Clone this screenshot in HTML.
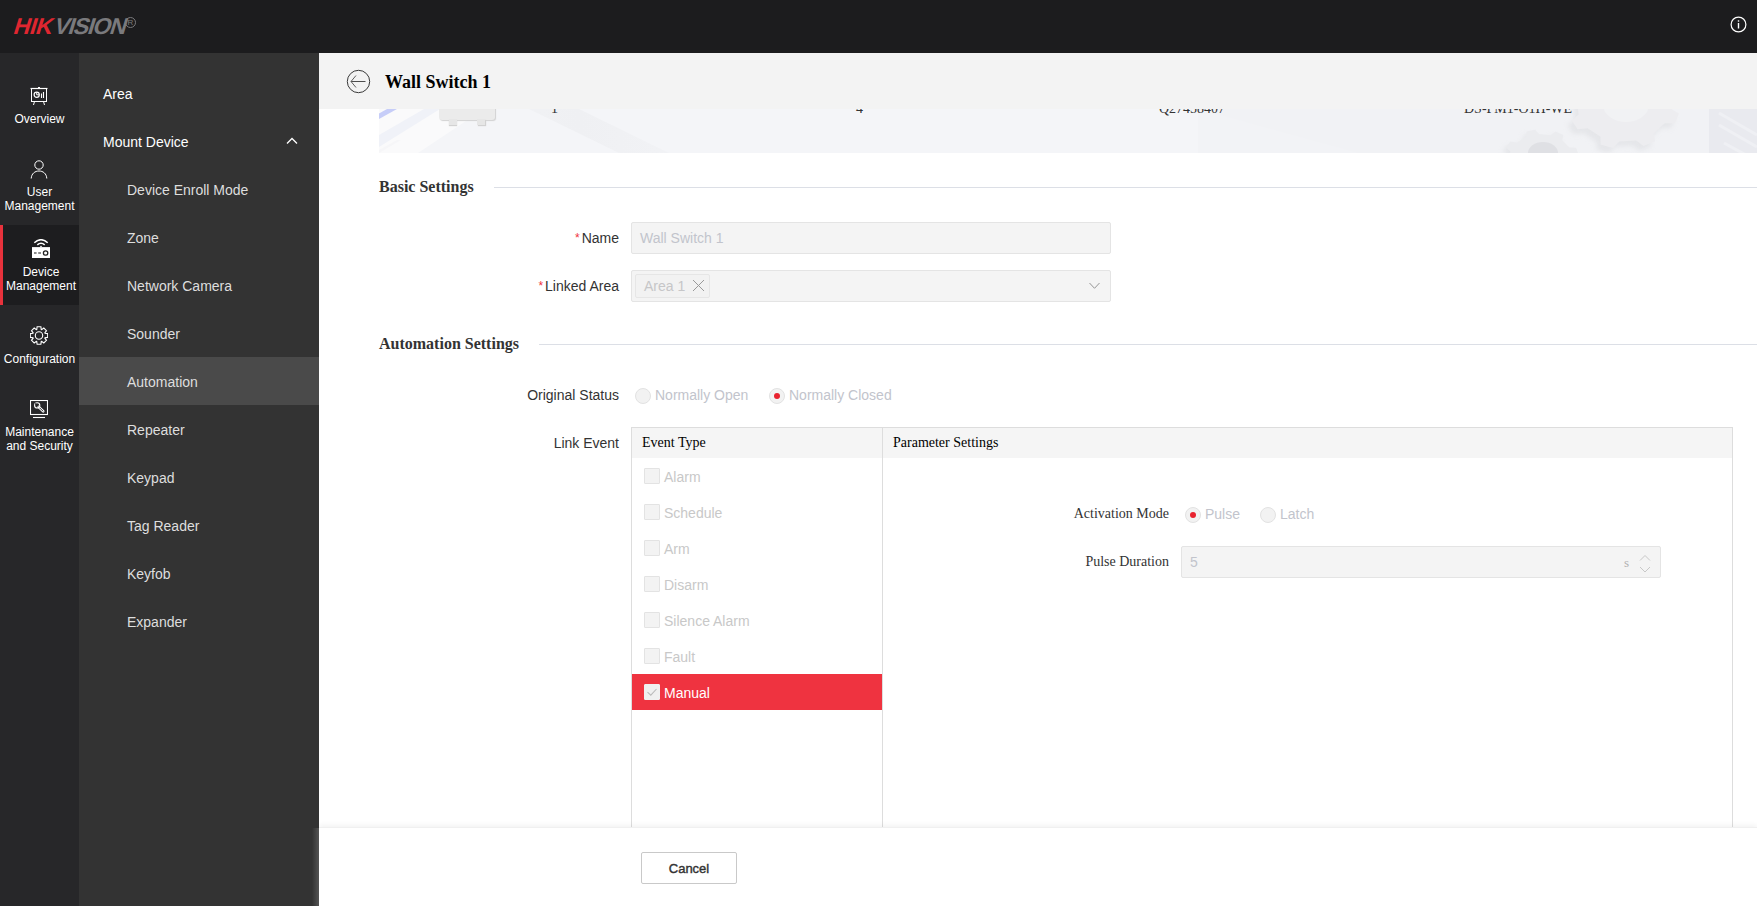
<!DOCTYPE html>
<html><head><meta charset="utf-8">
<style>
*{margin:0;padding:0;box-sizing:border-box;}
html,body{width:1757px;height:906px;overflow:hidden;background:#fff;font-family:"Liberation Sans",sans-serif;}
.abs{position:absolute;}
#hdr{position:absolute;left:0;top:0;width:1757px;height:53px;background:#1c1c1e;}
#logo{position:absolute;left:11px;top:14px;height:24px;font:bold 23px/24px "Liberation Sans",sans-serif;white-space:nowrap;transform:skewX(-17deg);transform-origin:0 100%;}
#logo .r{color:#df2630;letter-spacing:-0.4px;}
#logo .g{color:#7a7a7d;letter-spacing:-1.1px;margin-left:2px;}
#reg{position:absolute;left:125px;top:17px;width:11px;height:11px;border:1px solid #7a7a7d;border-radius:50%;font:8px/9px "Liberation Sans",sans-serif;color:#7a7a7d;text-align:center;}
#nav{position:absolute;left:0;top:53px;width:79px;height:853px;background:#272729;}
.ni{position:absolute;left:0;width:79px;color:#fff;font-size:12px;line-height:14px;text-align:center;}
.ni svg{position:absolute;}
#sub{position:absolute;left:79px;top:53px;width:240px;height:853px;background:#333333;}
.si{position:absolute;left:0;width:240px;height:48px;line-height:48px;font-size:14px;color:#fff;}
.si.l2{color:#dedede;padding-left:48px;}
.si.l1{padding-left:24px;}
.si.sel{}
#main{position:absolute;left:319px;top:53px;width:1438px;height:853px;background:#fff;overflow:hidden;}
.radio{width:16px;height:16px;border-radius:50%;background:#f2f2f2;border:1px solid #e2e2e2;}
.radio.on::after{content:"";position:absolute;left:4px;top:4px;width:6px;height:6px;border-radius:50%;background:#e8232f;}
.ev{position:absolute;left:313px;width:250px;height:36px;font-size:14px;color:#c8c8c8;line-height:20px;padding:9px 0 0 32px;}
.ev i{position:absolute;left:12px;top:10px;width:16px;height:16px;background:#f3f3f3;border:1px solid #e3e3e3;border-radius:1px;}
.ev.sel{color:#fff;}
.ev.sel i{background:#f0f0f0;border-color:#f0f0f0;}
.serif{font-family:"Liberation Serif",serif;}
</style></head>
<body>
<div id="hdr">
  <svg class="abs" style="left:1730px;top:16px" width="17" height="17" viewBox="0 0 17 17" fill="none" stroke="#fff" stroke-width="1.2"><circle cx="8.5" cy="8.5" r="7.4"/><path d="M8.5 7v5.5" stroke-width="1.4"/><path d="M8.5 4.3v1.4" stroke-width="1.4"/></svg>
  <div id="logo"><span class="r">HIK</span><span class="g">VISION</span></div><div id="reg">R</div>
</div>
<div id="nav">
  <svg class="abs" style="left:30px;top:34px" width="18" height="19" viewBox="0 0 18 19" fill="none" stroke="#fff" stroke-width="1">
    <path d="M0.5 1.5H17.5" stroke-width="1.2"/><path d="M8 0.5h2"/><rect x="1.5" y="1.5" width="15" height="13"/>
    <circle cx="6.7" cy="7.8" r="2.6" stroke-width="1.2"/><path d="M6.7 7.8V5.4M6.7 7.8H9.1" stroke-width="1"/>
    <path d="M11.5 6.5v4.5M13.5 5v6" stroke-width="1.1"/>
    <path d="M4.5 14.5l-1 3.5M13.5 14.5l1 3.5"/>
  </svg>
  <div class="ni" style="top:59px">Overview</div>

  <svg class="abs" style="left:30px;top:107px" width="18" height="19" viewBox="0 0 18 19" fill="none" stroke="#fff" stroke-width="1">
    <circle cx="9" cy="5" r="4.2"/><path d="M1.2 18.5C1.5 13.5 5 11 9 11s7.5 2.5 7.8 7.5"/>
  </svg>
  <div class="ni" style="top:132px">User<br>Management</div>

  <div class="abs" style="left:0;top:172px;width:79px;height:80px;background:#1d1d1f"></div>
  <div class="abs" style="left:0;top:172px;width:3px;height:80px;background:#e8323c"></div>
  <svg class="abs" style="left:32px;top:186px" width="18" height="20" viewBox="0 0 18 20" fill="none" stroke="#fff">
    <path d="M2.3 3.7Q9 -2.3 15.7 3.7" stroke-width="1.5"/><path d="M5.3 5.9Q9 2.7 12.7 5.9" stroke-width="1.5"/>
    <path d="M7.8 8L9 6.6 10.2 8Z" fill="#fff" stroke="none"/>
    <rect x="0" y="8.1" width="18" height="10.9" fill="#fff" stroke="none"/>
    <path d="M2 14h2.6M6.2 14h2.8" stroke="#666" stroke-width="1.5"/>
    <circle cx="13.6" cy="14" r="2.2" stroke="#222" stroke-width="1.3"/>
  </svg>
  <div class="ni" style="top:212px;left:3px;width:76px">Device<br>Management</div>

  <svg class="abs" style="left:30px;top:273px" width="18" height="19" viewBox="0 0 18 19" fill="none" stroke="#fff" stroke-width="1.1" stroke-linejoin="miter">
    <path d="M6.75 3.51 L7.11 0.80 L10.89 0.80 L11.25 3.51 L11.64 3.67 L13.82 2.02 L16.48 4.68 L14.83 6.86 L14.99 7.25 L17.70 7.61 L17.70 11.39 L14.99 11.75 L14.83 12.14 L16.48 14.32 L13.82 16.98 L11.64 15.33 L11.25 15.49 L10.89 18.20 L7.11 18.20 L6.75 15.49 L6.36 15.33 L4.18 16.98 L1.52 14.32 L3.17 12.14 L3.01 11.75 L0.30 11.39 L0.30 7.61 L3.01 7.25 L3.17 6.86 L1.52 4.68 L4.18 2.02 L6.36 3.67Z"/>
    <circle cx="9" cy="9.5" r="3.7"/>
  </svg>
  <div class="ni" style="top:299px">Configuration</div>

  <svg class="abs" style="left:30px;top:347px" width="18" height="19" viewBox="0 0 18 19" fill="none" stroke="#fff" stroke-width="1.1">
    <rect x="0.5" y="0.5" width="17" height="14"/><path d="M3 17.5h12"/>
    <path d="M8.6 6.9L13.2 11.3" stroke-width="2.6" stroke-linecap="round"/><path d="M8.8 7.1L13 11.1" stroke="#272729" stroke-width="0.9" stroke-linecap="round"/>
    <circle cx="7.2" cy="5.4" r="2.6" stroke-width="1.1"/><path d="M5.2 3.4L6.6 4.8" stroke="#272729" stroke-width="1.4"/><circle cx="7.2" cy="5.4" r="0.9" fill="#272729" stroke="none"/>
  </svg>
  <div class="ni" style="top:372px">Maintenance<br>and Security</div>
</div>
<div id="sub">
  <div class="abs" style="left:0;top:304px;width:240px;height:48px;background:#4a4a4a"></div>
  <div class="si l1" style="top:17px">Area</div>
  <div class="si l1" style="top:65px">Mount Device</div>
  <svg class="abs" style="left:207px;top:84px" width="12" height="8" viewBox="0 0 12 8" fill="none" stroke="#fff" stroke-width="1.3"><path d="M1 6.5L6 1.5 11 6.5"/></svg>
  <div class="si l2" style="top:113px">Device Enroll Mode</div>
  <div class="si l2" style="top:161px">Zone</div>
  <div class="si l2" style="top:209px">Network Camera</div>
  <div class="si l2" style="top:257px">Sounder</div>
  <div class="si l2 sel" style="top:305px">Automation</div>
  <div class="si l2" style="top:353px">Repeater</div>
  <div class="si l2" style="top:401px">Keypad</div>
  <div class="si l2" style="top:449px">Tag Reader</div>
  <div class="si l2" style="top:497px">Keyfob</div>
  <div class="si l2" style="top:545px">Expander</div>
</div>
<div class="abs" style="left:312px;top:828px;width:7px;height:78px;background:linear-gradient(90deg,rgba(255,255,255,0),rgba(255,255,255,0.16));z-index:2"></div>
<div id="main">
  <!-- banner -->
  <div class="abs" style="left:60px;top:40px;width:1378px;height:60px;background:#f3f4f7;overflow:hidden">
    <div class="abs" style="left:0;top:0;width:820px;height:60px;background:#f4f5f8"></div>
    <div class="abs" style="left:0;top:0;width:200px;height:60px;background:#fafafb;clip-path:polygon(0 16px,105px 16px,39px 60px,0 60px)"></div>
    <div class="abs" style="left:0;top:0;width:200px;height:60px;background:#f0f2f8;clip-path:polygon(0 42px,45px 16px,61px 16px,0 54px)"></div>
    <div class="abs" style="left:0;top:0;width:200px;height:60px;background:#c6cdf8;clip-path:polygon(0 20.5px,8px 16px,18px 16px,0 26px)"></div>
    <div class="abs" style="left:0;top:0;width:200px;height:60px;background:#f6f6f8;clip-path:polygon(0 60px,0 57px,18px 47px,22px 47px,0 60px)"></div>
    <div class="abs" style="left:0;top:0;width:400px;height:60px;background:linear-gradient(90deg,#f4f5f8,#eff0f3 50%,#f4f5f8);clip-path:polygon(150px 16px,200px 16px,290px 60px,240px 60px)"></div>
    <div class="abs" style="left:60px;top:0;width:56px;height:26.5px;background:#ebebeb;border-radius:0 0 3px 3px;box-shadow:1px 1px 1px #d2d2d2"></div>
    <div class="abs" style="left:70px;top:26px;width:8px;height:6px;background:#e6e6e6;box-shadow:0 1px 1px #d2d2d2"></div>
    <div class="abs" style="left:98px;top:26px;width:8px;height:6px;background:#e6e6e6;box-shadow:1px 1px 1px #d2d2d2"></div>
    <div class="abs" style="left:819px;top:0;width:700px;height:60px;background:#f1f2f5;clip-path:polygon(0 0,100% 0,100% 100%,120px 100%,0 20px)"></div>
    <div class="abs" style="left:819px;top:16px;width:160px;height:44px;background:#f2f3f6;clip-path:polygon(0 0,0 100%,100% 100%)"></div>
    <svg class="abs" style="left:0;top:0" width="1378" height="60" viewBox="0 0 1378 60">
      <defs><filter id="gs" x="-20%" y="-20%" width="140%" height="140%"><feGaussianBlur stdDeviation="2.5"/></filter></defs>
      <path d="M1192.6 73.4 L1197.1 77.4 L1192.7 83.5 L1186.0 82.5 L1176.9 88.1 L1176.5 93.4 L1167.9 95.3 L1164.0 90.9 L1152.5 89.8 L1147.4 93.4 L1139.6 90.0 L1140.8 84.7 L1133.7 77.6 L1126.9 77.3 L1124.5 70.6 L1130.1 67.5 L1131.4 58.6 L1126.9 54.6 L1131.3 48.5 L1138.0 49.5 L1147.1 43.9 L1147.5 38.6 L1156.1 36.7 L1160.0 41.1 L1171.5 42.2 L1176.6 38.6 L1184.4 42.0 L1183.2 47.3 L1190.3 54.4 L1197.1 54.7 L1199.5 61.4 L1193.9 64.5Z" fill="#d9dade" opacity="0.5" filter="url(#gs)" transform="translate(-3 4)"/>
      <path d="M1192.6 73.4 L1197.1 77.4 L1192.7 83.5 L1186.0 82.5 L1176.9 88.1 L1176.5 93.4 L1167.9 95.3 L1164.0 90.9 L1152.5 89.8 L1147.4 93.4 L1139.6 90.0 L1140.8 84.7 L1133.7 77.6 L1126.9 77.3 L1124.5 70.6 L1130.1 67.5 L1131.4 58.6 L1126.9 54.6 L1131.3 48.5 L1138.0 49.5 L1147.1 43.9 L1147.5 38.6 L1156.1 36.7 L1160.0 41.1 L1171.5 42.2 L1176.6 38.6 L1184.4 42.0 L1183.2 47.3 L1190.3 54.4 L1197.1 54.7 L1199.5 61.4 L1193.9 64.5Z" fill="#ebecef"/>
      <ellipse cx="1164" cy="60" rx="15" ry="11" fill="#dfe0e4"/>
      <path d="M1291.8 15.7 L1299.9 20.4 L1295.9 30.2 L1285.7 30.3 L1274.8 40.4 L1276.2 48.3 L1264.5 52.9 L1257.1 47.4 L1240.3 48.5 L1234.2 54.9 L1221.7 51.7 L1221.5 43.7 L1208.6 35.2 L1198.5 36.3 L1192.5 27.2 L1199.6 21.5 L1198.2 8.3 L1190.1 3.6 L1194.1 -6.2 L1204.3 -6.3 L1215.2 -16.4 L1213.8 -24.3 L1225.5 -28.9 L1232.9 -23.4 L1249.7 -24.5 L1255.8 -30.9 L1268.3 -27.7 L1268.5 -19.7 L1281.4 -11.2 L1291.5 -12.3 L1297.5 -3.2 L1290.4 2.5Z" fill="#d9dade" opacity="0.5" filter="url(#gs)" transform="translate(-4 5)"/>
      <path d="M1291.8 15.7 L1299.9 20.4 L1295.9 30.2 L1285.7 30.3 L1274.8 40.4 L1276.2 48.3 L1264.5 52.9 L1257.1 47.4 L1240.3 48.5 L1234.2 54.9 L1221.7 51.7 L1221.5 43.7 L1208.6 35.2 L1198.5 36.3 L1192.5 27.2 L1199.6 21.5 L1198.2 8.3 L1190.1 3.6 L1194.1 -6.2 L1204.3 -6.3 L1215.2 -16.4 L1213.8 -24.3 L1225.5 -28.9 L1232.9 -23.4 L1249.7 -24.5 L1255.8 -30.9 L1268.3 -27.7 L1268.5 -19.7 L1281.4 -11.2 L1291.5 -12.3 L1297.5 -3.2 L1290.4 2.5Z" fill="#ededf0"/>
      <ellipse cx="1247" cy="12" rx="23" ry="17" fill="#f1f2f4"/>
      <rect x="1330" y="0" width="48" height="60" fill="#e9eaef"/>
      <path d="M1340 20L1378 42M1340 32L1378 54M1345 50L1378 68" stroke="#eff0f4" stroke-width="3"/>
    </svg>
    <div class="abs serif" style="left:172px;top:6px;font-size:14px;color:#333;line-height:20px">1</div>
    <div class="abs serif" style="left:477px;top:6px;font-size:14px;color:#333;line-height:20px">4</div>
    <div class="abs serif" style="left:780px;top:6px;font-size:14px;color:#333;line-height:20px">Q27458407</div>
    <div class="abs serif" style="left:1085px;top:6px;font-size:14px;color:#333;line-height:20px">DS-PM1-O1H-WE</div>
  </div>
  <!-- page header -->
  <div class="abs" style="left:0;top:0;width:1438px;height:56px;background:#f3f3f3">
    <svg class="abs" style="left:27px;top:16px" width="25" height="25" viewBox="0 0 25 25" fill="none" stroke="#3a3a3a" stroke-width="1">
      <circle cx="12.5" cy="12.5" r="11.2"/><path d="M5.2 12.5H19.5" stroke-width="0.9"/><path d="M10 6.5L5 12.5 10 18.5" stroke-width="0.8"/>
    </svg>
    <div class="abs serif" style="left:66px;top:18px;font-size:18px;font-weight:bold;color:#000;line-height:22px">Wall Switch 1</div>
  </div>
  <!-- basic settings -->
  <div class="abs serif" style="left:60px;top:124px;font-size:16px;font-weight:bold;color:#333;line-height:20px">Basic Settings</div>
  <div class="abs" style="left:175px;top:134px;width:1263px;height:1px;background:#dcdfe6"></div>

  <div class="abs" style="left:200px;top:175px;width:100px;text-align:right;font-size:14px;color:#333;line-height:20px"><span style="color:#ef3340;font-size:12px;position:relative;top:-1px;margin-right:2px">*</span>Name</div>
  <div class="abs" style="left:312px;top:169px;width:480px;height:32px;background:#f4f4f4;border:1px solid #e4e4e4;border-radius:2px;font-size:14px;color:#c2c4cc;line-height:30px;padding-left:8px">Wall Switch 1</div>

  <div class="abs" style="left:180px;top:223px;width:120px;text-align:right;font-size:14px;color:#333;line-height:20px"><span style="color:#ef3340;font-size:12px;position:relative;top:-1px;margin-right:2px">*</span>Linked Area</div>
  <div class="abs" style="left:312px;top:217px;width:480px;height:32px;background:#f4f4f4;border:1px solid #e4e4e4;border-radius:2px"></div>
  <div class="abs" style="left:316px;top:221px;width:75px;height:24px;background:#f2f2f2;border:1px solid #e6e6e6;border-radius:2px;font-size:14px;color:#c6c6c8;line-height:22px;padding-left:8px">Area 1</div>
  <svg class="abs" style="left:373px;top:226px" width="13" height="13" viewBox="0 0 13 13" stroke="#9a9a9a" stroke-width="1"><path d="M1 1L12 12M12 1L1 12"/></svg>
  <svg class="abs" style="left:770px;top:229px" width="12" height="8" viewBox="0 0 12 8" fill="none" stroke="#8a8a8a" stroke-width="0.9"><path d="M0.5 1L5.5 6.3 10.5 1"/></svg>

  <!-- automation settings -->
  <div class="abs serif" style="left:60px;top:281px;font-size:16px;font-weight:bold;color:#333;line-height:20px">Automation Settings</div>
  <div class="abs" style="left:220px;top:291px;width:1218px;height:1px;background:#dcdfe6"></div>

  <div class="abs" style="left:150px;top:332px;width:150px;text-align:right;font-size:14px;color:#333;line-height:20px">Original Status</div>
  <div class="abs radio" style="left:316px;top:335px"></div>
  <div class="abs" style="left:336px;top:332px;font-size:14px;color:#c2c4cc;line-height:20px">Normally Open</div>
  <div class="abs radio on" style="left:450px;top:335px"></div>
  <div class="abs" style="left:470px;top:332px;font-size:14px;color:#c2c4cc;line-height:20px">Normally Closed</div>

  <div class="abs" style="left:150px;top:380px;width:150px;text-align:right;font-size:14px;color:#333;line-height:20px">Link Event</div>

  <!-- table -->
  <div class="abs" style="left:312px;top:374px;width:1102px;height:500px;border:1px solid #dddddd;border-bottom:none"></div>
  <div class="abs" style="left:313px;top:375px;width:1100px;height:30px;background:#f5f5f5"></div>
  <div class="abs" style="left:563px;top:375px;width:1px;height:500px;background:#dddddd"></div>
  <div class="abs serif" style="left:323px;top:380px;font-size:14px;color:#000;line-height:20px">Event Type</div>
  <div class="abs serif" style="left:574px;top:380px;font-size:14px;color:#000;line-height:20px">Parameter Settings</div>

  <div class="abs" style="left:313px;top:621px;width:250px;height:36px;background:#ef3340"></div>
  <div class="ev" style="top:405px"><i></i>Alarm</div>
  <div class="ev" style="top:441px"><i></i>Schedule</div>
  <div class="ev" style="top:477px"><i></i>Arm</div>
  <div class="ev" style="top:513px"><i></i>Disarm</div>
  <div class="ev" style="top:549px"><i></i>Silence Alarm</div>
  <div class="ev" style="top:585px"><i></i>Fault</div>
  <div class="ev sel" style="top:621px"><i><svg width="16" height="16" viewBox="0 0 16 16" fill="none" stroke="#bbb" stroke-width="1.1" style="position:absolute;left:-1px;top:-1px"><path d="M3.5 8.2L6.8 11.2 12.5 5"/></svg></i>Manual</div>

  <div class="abs serif" style="left:655px;top:451px;width:195px;text-align:right;font-size:14px;color:#333;line-height:20px">Activation Mode</div>
  <div class="abs radio on" style="left:866px;top:454px"></div>
  <div class="abs" style="left:886px;top:451px;font-size:14px;color:#c2c4cc;line-height:20px">Pulse</div>
  <div class="abs radio" style="left:941px;top:454px"></div>
  <div class="abs" style="left:961px;top:451px;font-size:14px;color:#c2c4cc;line-height:20px">Latch</div>

  <div class="abs serif" style="left:655px;top:499px;width:195px;text-align:right;font-size:14px;color:#333;line-height:20px">Pulse Duration</div>
  <div class="abs" style="left:862px;top:493px;width:480px;height:32px;background:#f4f4f4;border:1px solid #e4e4e4;border-radius:2px;font-size:14px;color:#c2c4cc;line-height:30px;padding-left:8px">5</div>
  <div class="abs serif" style="left:1305px;top:502px;font-size:13px;color:#b0b0b0;line-height:16px">s</div>
  <svg class="abs" style="left:1320px;top:501px" width="12" height="20" viewBox="0 0 12 20" fill="none" stroke="#c8c8c8" stroke-width="1"><path d="M1 6.5L6 1.5 11 6.5M1 13L6 18 11 13"/></svg>

  <!-- footer -->
  <div class="abs" style="left:0;top:774px;width:1438px;height:79px;background:#fff;box-shadow:0 -2px 5px rgba(0,0,0,0.05);border-top:1px solid #f0f0f0"></div>
  <div class="abs" style="left:322px;top:799px;width:96px;height:32px;border:1px solid #c9c9c9;border-radius:2px;background:#fff;text-align:center;font-size:13px;color:#333;-webkit-text-stroke:0.4px #333;line-height:31px">Cancel</div>
</div>
</body></html>
